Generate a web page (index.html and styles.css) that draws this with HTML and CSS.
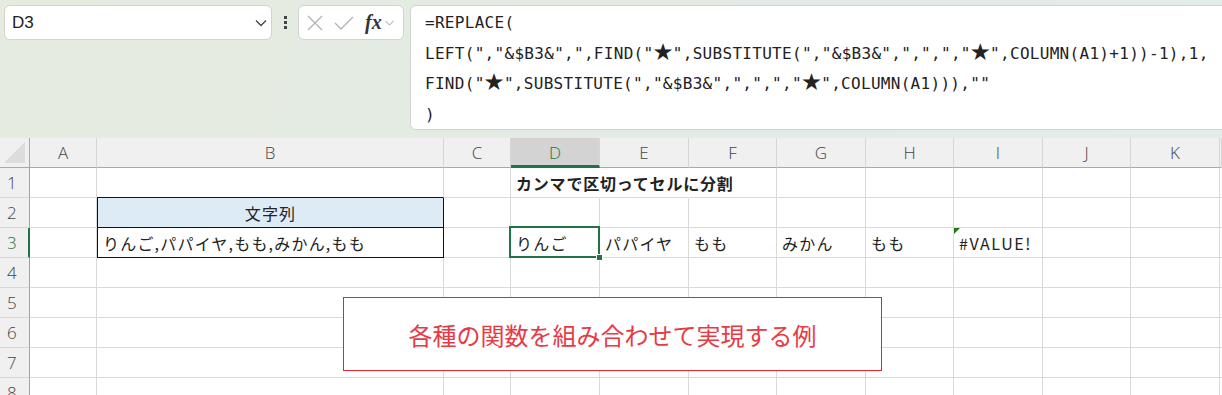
FILE: index.html
```html
<!DOCTYPE html>
<html lang="ja">
<head>
  <meta charset="UTF-8">
  <title>カンマで区切ってセルに分割</title>
  <link rel="stylesheet" href="styles.css">
</head>
<body>
  <div class="topbar">
    <div class="namebox">
      <span class="cellref">D3</span>
      <svg class="chev" width="12" height="8" viewBox="0 0 12 8"><path d="M1 1.5 L6 6.5 L11 1.5" fill="none" stroke="#444" stroke-width="1.3"/></svg>
    </div>
    <div class="dots"><i></i><i></i><i></i></div>
    <div class="fxbox">
      <svg width="18" height="18" viewBox="0 0 18 18"><path d="M2 2 L16 16 M16 2 L2 16" stroke="#b4b4b4" stroke-width="1.4"/></svg>
      <svg width="20" height="18" viewBox="0 0 20 18"><path d="M1 9 L7 15 L19 3" fill="none" stroke="#b4b4b4" stroke-width="1.4"/></svg>
      <span class="fx">fx</span>
      <svg width="9" height="6" viewBox="0 0 9 6"><path d="M0.5 1 L4.5 5 L8.5 1" fill="none" stroke="#999" stroke-width="1"/></svg>
    </div>
    <div class="formula">
      <div>=REPLACE(</div>
      <div>LEFT(","&amp;$B3&amp;",",FIND("<span class="star">★</span>",SUBSTITUTE(","&amp;$B3&amp;",",",","<span class="star">★</span>",COLUMN(A1)+1))-1),1,</div>
      <div>FIND("<span class="star">★</span>",SUBSTITUTE(","&amp;$B3&amp;",",",","<span class="star">★</span>",COLUMN(A1))),""</div>
      <div>)</div>
    </div>
  </div>

  <div class="sheet">
    <div class="row head">
      <div class="hd corner"><span class="tri"></span></div>
      <div class="hd">A</div><div class="hd">B</div><div class="hd">C</div>
      <div class="hd sel">D</div><div class="hd">E</div><div class="hd">F</div>
      <div class="hd">G</div><div class="hd">H</div><div class="hd">I</div>
      <div class="hd">J</div><div class="hd">K</div><div class="hd"></div>
    </div>
    <div class="row">
      <div class="rh">1</div>
      <div class="c"></div><div class="c tb"></div><div class="c"></div>
      <div class="c title nor">カンマで区切ってセルに分割</div><div class="c nor"></div><div class="c"></div>
      <div class="c"></div><div class="c"></div><div class="c"></div>
      <div class="c"></div><div class="c"></div><div class="c"></div>
    </div>
    <div class="row">
      <div class="rh">2</div>
      <div class="c"></div><div class="c boxed label">文字列</div><div class="c"></div>
      <div class="c"></div><div class="c"></div><div class="c"></div>
      <div class="c"></div><div class="c"></div><div class="c"></div>
      <div class="c"></div><div class="c"></div><div class="c"></div>
    </div>
    <div class="row">
      <div class="rh sel">3</div>
      <div class="c"></div><div class="c boxed">りんご,パパイヤ,もも,みかん,もも</div><div class="c"></div>
      <div class="c active">りんご</div><div class="c">パパイヤ</div><div class="c">もも</div>
      <div class="c">みかん</div><div class="c">もも</div><div class="c err">#VALUE!</div>
      <div class="c"></div><div class="c"></div><div class="c"></div>
    </div>
    <div class="row">
      <div class="rh">4</div>
      <div class="c"></div><div class="c"></div><div class="c"></div>
      <div class="c"></div><div class="c"></div><div class="c"></div>
      <div class="c"></div><div class="c"></div><div class="c"></div>
      <div class="c"></div><div class="c"></div><div class="c"></div>
    </div>
    <div class="row">
      <div class="rh">5</div>
      <div class="c"></div><div class="c"></div><div class="c"></div>
      <div class="c"></div><div class="c"></div><div class="c"></div>
      <div class="c"></div><div class="c"></div><div class="c"></div>
      <div class="c"></div><div class="c"></div><div class="c"></div>
    </div>
    <div class="row">
      <div class="rh">6</div>
      <div class="c"></div><div class="c"></div><div class="c"></div>
      <div class="c"></div><div class="c"></div><div class="c"></div>
      <div class="c"></div><div class="c"></div><div class="c"></div>
      <div class="c"></div><div class="c"></div><div class="c"></div>
    </div>
    <div class="row">
      <div class="rh">7</div>
      <div class="c"></div><div class="c"></div><div class="c"></div>
      <div class="c"></div><div class="c"></div><div class="c"></div>
      <div class="c"></div><div class="c"></div><div class="c"></div>
      <div class="c"></div><div class="c"></div><div class="c"></div>
    </div>
    <div class="row">
      <div class="rh">8</div>
      <div class="c"></div><div class="c"></div><div class="c"></div>
      <div class="c"></div><div class="c"></div><div class="c"></div>
      <div class="c"></div><div class="c"></div><div class="c"></div>
      <div class="c"></div><div class="c"></div><div class="c"></div>
    </div>

    <div class="note">各種の関数を組み合わせて実現する例</div>
  </div>
</body>
</html>
```

FILE: styles.css
```css
body {
  margin: 0;
  width: 1222px;
  height: 395px;
  overflow: hidden;
  background: #fff;
  font-family: "Noto Sans CJK JP", sans-serif;
  color: #222;
}

/* formula bar */
.topbar {
  height: 138px;
  box-sizing: border-box;
  padding: 5px 0 0 4px;
  display: flex;
  align-items: flex-start;
  background: linear-gradient(100deg, #e6ebdf, #e3ebe6 60%, #e2ecea);
  overflow: hidden;
}

.namebox {
  flex: none;
  width: 268px;
  height: 35px;
  box-sizing: border-box;
  background: #fff;
  border: 1px solid #d2d4d0;
  border-radius: 6px;
  display: flex;
  align-items: center;
  justify-content: space-between;
  padding: 0 4px 0 7px;
}

.cellref {
  font-family: "Liberation Sans", sans-serif;
  font-size: 17px;
  color: #222;
}

.dots {
  flex: none;
  width: 26px;
  height: 35px;
  display: flex;
  flex-direction: column;
  align-items: center;
  justify-content: center;
  gap: 2px;
}

.dots i {
  width: 3px;
  height: 3px;
  background: #444;
}

.fxbox {
  flex: none;
  width: 106px;
  height: 35px;
  box-sizing: border-box;
  background: #fff;
  border: 1px solid #d2d4d0;
  border-radius: 6px;
  display: flex;
  align-items: center;
  gap: 10px;
  padding: 0 4px 0 7px;
}

.fx {
  font-family: "Liberation Serif", serif;
  font-style: italic;
  font-weight: bold;
  font-size: 20px;
  color: #333;
  margin-left: 1px;
  margin-right: -7px;
}

.formula {
  flex: 1;
  min-width: 0;
  height: 125px;
  margin-left: 6px;
  margin-right: -12px;
  box-sizing: border-box;
  background: #fff;
  border: 1px solid #d2d4d0;
  border-radius: 6px;
  padding: 2px 14px 0;
  font-family: "DejaVu Sans Mono", "Liberation Mono", monospace;
  font-size: 16px;
  letter-spacing: 0.3px;
  line-height: 30.7px;
  color: #222;
  white-space: nowrap;
  overflow: hidden;
}

.star {
  font-family: "Noto Sans CJK JP", sans-serif;
  font-size: 19px;
  line-height: 1;
}

/* sheet grid */
.sheet {
  position: relative;
}

.row {
  display: grid;
  grid-template-columns: 30px 67px 347px 67px 89px 89px 88px 89px 88px 89px 88px 89px 1fr;
  height: 30px;
}

.hd, .rh {
  background: #f0f0f0;
  color: #444;
  font-family: "Open Sans", sans-serif;
  font-weight: 300;
  font-size: 17px;
  display: flex;
  align-items: center;
  justify-content: center;
  box-sizing: border-box;
}

.hd {
  border-right: 1px solid #d6d6d6;
  border-bottom: 1px solid #a8a8a8;
}

.hd.sel {
  background: #d3d3d3;
  color: #217346;
  border-bottom: 3px solid #217346;
  padding-top: 2px;
}

.corner {
  position: relative;
  border-right: 1px solid #a8a8a8;
}

.tri {
  position: absolute;
  right: 4px;
  bottom: 4px;
  border-style: solid;
  border-width: 0 0 21px 21px;
  border-color: transparent transparent #dcdcdc transparent;
}

.rh {
  border-right: 1px solid #a0a0a0;
  border-bottom: 1px solid #d6d6d6;
  justify-content: flex-start;
  padding-left: 7px;
}

.rh.sel {
  color: #217346;
  border-right: 2px solid #217346;
}

.c {
  box-sizing: border-box;
  border-right: 1px solid #dadada;
  border-bottom: 1px solid #dadada;
  padding: 0 5px;
  font-size: 16px;
  display: flex;
  align-items: center;
  white-space: nowrap;
  position: relative;
  letter-spacing: 1.2px;
}

.c.nor {
  border-right-color: transparent;
}

.c.tb {
  border-bottom-color: #111;
}

.c.boxed {
  border-left: 1px solid #111;
  border-right: 1px solid #111;
  border-bottom: 1px solid #111;
  padding-left: 5px;
}

.c.label {
  background: #ddebf7;
  justify-content: center;
}

.title {
  font-weight: bold;
  letter-spacing: 0.8px;
}

.active::after {
  content: "";
  position: absolute;
  left: -2px;
  top: -2px;
  right: -1px;
  bottom: -1px;
  border: 2px solid #217346;
}

.active::before {
  content: "";
  position: absolute;
  right: -4px;
  bottom: -4px;
  width: 5px;
  height: 5px;
  background: #217346;
  border: 1px solid #fff;
  z-index: 1;
}

.c.err {
  letter-spacing: 1.6px;
}

.err::before {
  content: "";
  position: absolute;
  left: 0;
  top: 0;
  border-style: solid;
  border-width: 6px 6px 0 0;
  border-color: #1b7a1b transparent transparent transparent;
}

.note {
  position: absolute;
  left: 343px;
  top: 159px;
  width: 539px;
  height: 74px;
  box-sizing: border-box;
  background: #fff;
  border: 1px solid #e8222e;
  display: flex;
  align-items: center;
  justify-content: center;
  color: #e83a44;
  font-size: 24px;
}
```
